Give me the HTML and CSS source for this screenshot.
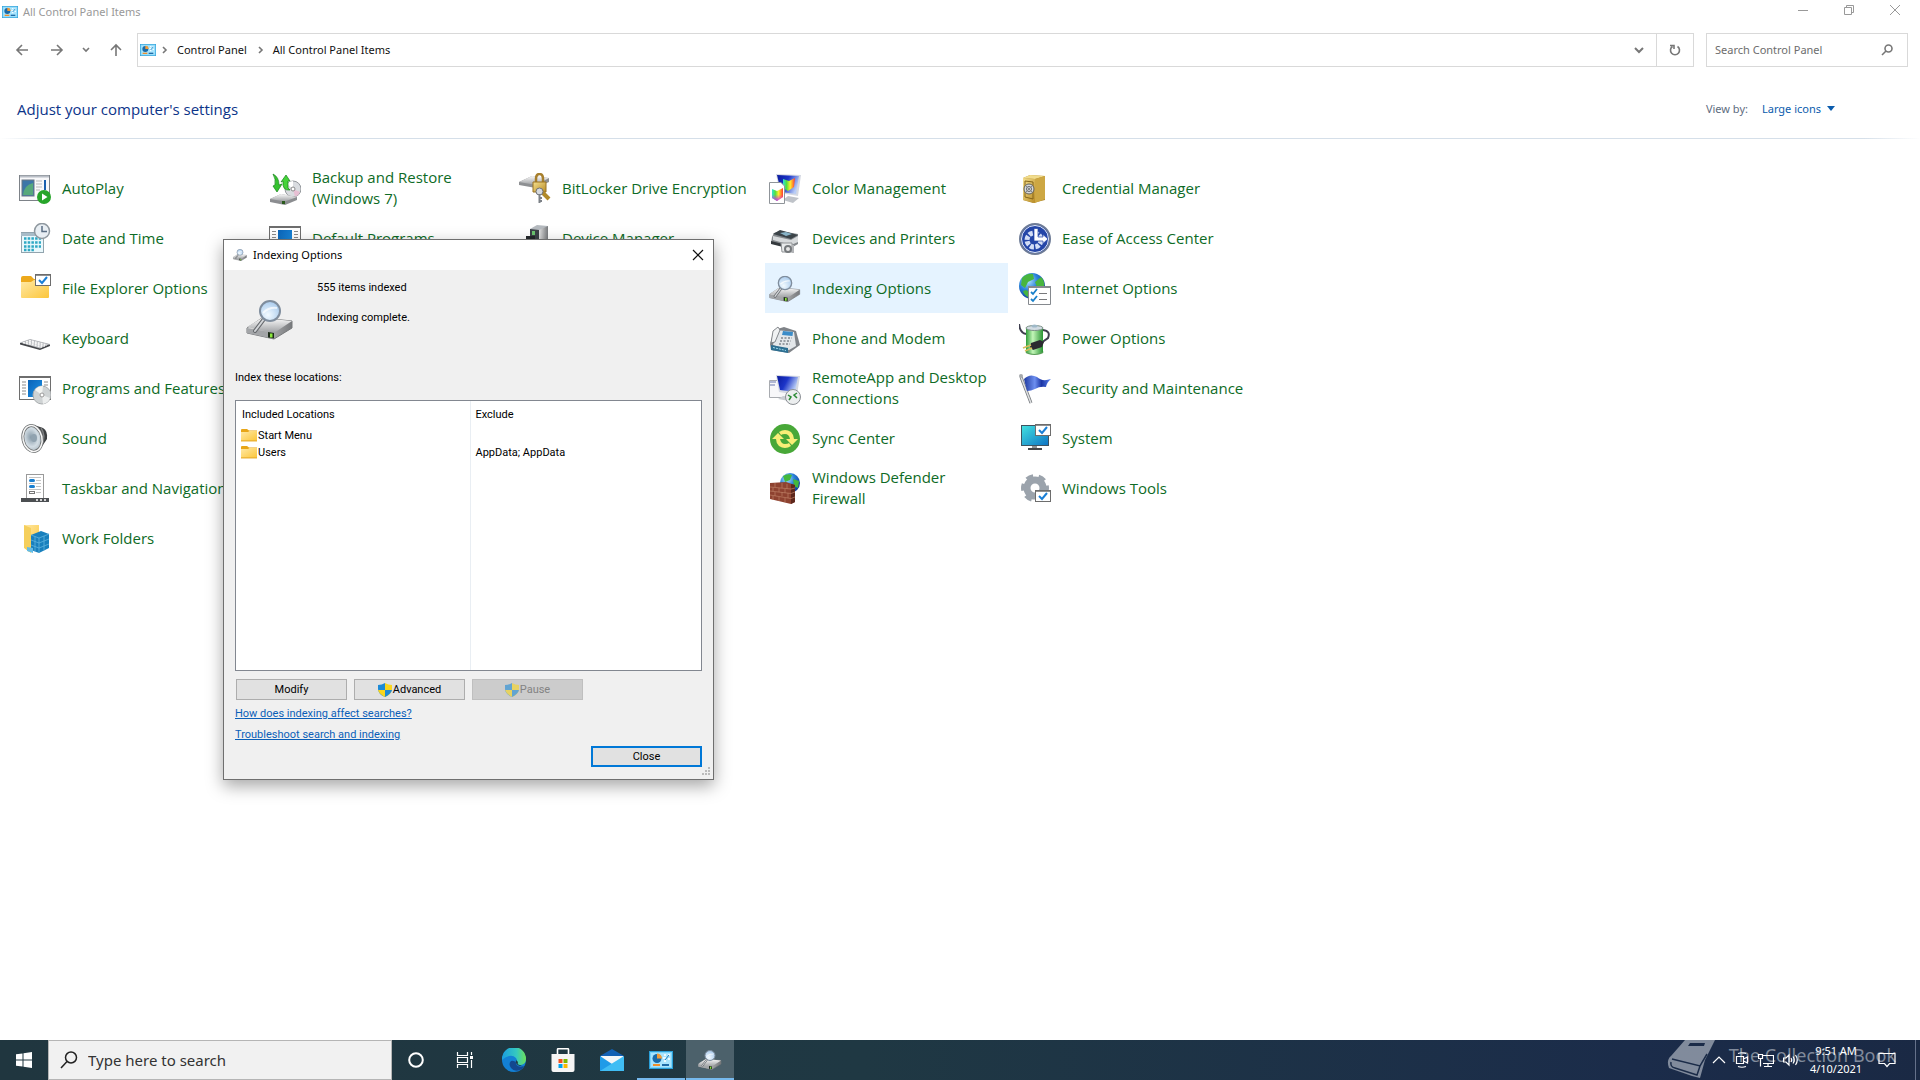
FILE: index.html
```html
<!DOCTYPE html>
<html lang="en">
<head>
<meta charset="utf-8">
<meta name="viewport" content="width=device-width, initial-scale=1">
<title>All Control Panel Items</title>
<link rel="stylesheet" href="styles.css">
</head>
<body>
<svg class="sprite" width="0" height="0" aria-hidden="true">
  <defs>
    <linearGradient id="steel" x1="0" y1="0" x2="0" y2="1"><stop offset="0" stop-color="#fafafa"/><stop offset="1" stop-color="#9c9ea1"/></linearGradient>
    <linearGradient id="steelDark" x1="0" y1="0" x2="1" y2="0"><stop offset="0" stop-color="#e2e2e2"/><stop offset="1" stop-color="#77797c"/></linearGradient>
    <radialGradient id="lens" cx=".4" cy=".7" r=".8"><stop offset="0" stop-color="#f2faff"/><stop offset="1" stop-color="#9fc4ea"/></radialGradient>
    <linearGradient id="folder" x1="0" y1="0" x2="1" y2="1"><stop offset="0" stop-color="#ffe9a6"/><stop offset="1" stop-color="#fcc63b"/></linearGradient>
    <linearGradient id="blue" x1="0" y1="0" x2="1" y2="1"><stop offset="0" stop-color="#0a63b8"/><stop offset="1" stop-color="#1f94e6"/></linearGradient>
    <linearGradient id="screen" x1="0" y1="0" x2="1" y2=".4"><stop offset="0" stop-color="#0a1a9c"/><stop offset=".5" stop-color="#1c35c8"/><stop offset="1" stop-color="#b9cdf6"/></linearGradient>
    <linearGradient id="rainbow" x1="0" y1="0" x2="1" y2="0"><stop offset="0" stop-color="#2ee3d8"/><stop offset=".3" stop-color="#54e03c"/><stop offset=".6" stop-color="#ffee2e"/><stop offset="1" stop-color="#ff3a2e"/></linearGradient>
    <linearGradient id="rainbowLow" x1="0" y1="0" x2="0" y2="1"><stop offset=".5" stop-color="#e930d8" stop-opacity="0"/><stop offset="1" stop-color="#c22bff"/></linearGradient>
    <radialGradient id="globe" cx=".35" cy=".3" r=".8"><stop offset="0" stop-color="#b7e6ff"/><stop offset=".45" stop-color="#2a83da"/><stop offset="1" stop-color="#0b2f8c"/></radialGradient>
    <linearGradient id="gold" x1="0" y1="0" x2="1" y2="1"><stop offset="0" stop-color="#f5e08e"/><stop offset="1" stop-color="#b98c26"/></linearGradient>
    <linearGradient id="green" x1="0" y1="0" x2="1" y2="0"><stop offset="0" stop-color="#2f9e3a"/><stop offset=".4" stop-color="#c3f6b8"/><stop offset="1" stop-color="#2a9434"/></linearGradient>
    <linearGradient id="monitor" x1="0" y1="0" x2="1" y2="1"><stop offset="0" stop-color="#43e2e0"/><stop offset="1" stop-color="#0d72c4"/></linearGradient>
    <radialGradient id="cone" cx=".45" cy=".45" r=".6"><stop offset="0" stop-color="#8397a5"/><stop offset=".6" stop-color="#d3dde4"/><stop offset="1" stop-color="#a7b4bd"/></radialGradient>
    <linearGradient id="flag" x1="0" y1="0" x2="1" y2="0"><stop offset="0" stop-color="#1f3aa0"/><stop offset=".4" stop-color="#6d8ff0"/><stop offset=".65" stop-color="#1b35a6"/><stop offset="1" stop-color="#5a82ee"/></linearGradient>
    <linearGradient id="edgeGreen" x1="0" y1="0" x2="1" y2="0"><stop offset="0" stop-color="#1a9de0"/><stop offset=".6" stop-color="#35c8c0"/><stop offset="1" stop-color="#6ee05a"/></linearGradient>

    <symbol id="i-index" viewBox="0 0 48 40">
      <path d="M1 28 16 18 46 21V28L28 39 1 33z" fill="url(#steelDark)" stroke="#77797b" stroke-width="1"/>
      <path d="M1 27 16 18 46 21 28 33z" fill="url(#steel)"/>
      <path d="M1 28 28 33V39L1 33z" fill="#a3a5a8"/>
      <path d="M22 32 28 33V38.500L22 37.500z" fill="#1c2c18"/><path d="M24 33.500h2.500v4H24z" fill="#8be83c"/>
      <path d="M18 19 9 31" stroke="#66696d" stroke-width="4" stroke-linecap="round"/>
      <path d="M18 19 9 31" stroke="#d2d5d8" stroke-width="2" stroke-linecap="round"/>
      <circle cx="24" cy="11" r="10" fill="url(#lens)" stroke="#7f8d9d" stroke-width="2"/>
      <path d="M17 13Q23 7 31 8" fill="none" stroke="#fff" stroke-width="2" opacity=".7"/>
    </symbol>
    <symbol id="i-cpl" viewBox="0 0 24 18">
      <rect x=".5" y=".5" width="23" height="17" fill="#7bd3fa" stroke="#2a9fd8"/>
      <rect x="2" y="2" width="20" height="14" fill="#a8e4fd"/>
      <circle cx="8" cy="7.500" r="4.500" fill="#1a6aa8"/><path d="M8 7.500V2.500A5 5 0 0 1 13 7.500z" fill="#f19b38"/>
      <path d="M15 4h2M19 4h2M14 7h3M19 8h2M15 10h2" stroke="#fff" stroke-width="1.500"/><path d="M16 9 20 4" stroke="#1e78b8" stroke-width="1"/>
      <path d="M4 14h7" stroke="#ef8f2c" stroke-width="2"/><path d="M13 14h7" stroke="#1e6ca8" stroke-width="2"/>
    </symbol>
    <symbol id="i-folder" viewBox="0 0 16 14">
      <path d="M0 2Q0 1 1 1H6L8 2.500H16V13H0z" fill="#e8a618"/><path d="M0 4H7L8.500 3H16V12.500H0z" fill="url(#folder)"/><path d="M0 13h16" stroke="#eab23a"/>
    </symbol>
    <symbol id="i-shield" viewBox="0 0 14 14">
      <path d="M7 0Q4 2 0 2V6Q0 11 7 14z" fill="#1c8ad6"/><path d="M7 0Q10 2 14 2V6Q14 11 7 14z" fill="#f9d61c"/>
      <path d="M7 7H14Q13 11 7 14z" fill="#1c8ad6"/><path d="M7 7H0Q1 11 7 14z" fill="#f9d61c"/>
    </symbol>
    <symbol id="i-check" viewBox="0 0 16 12">
      <rect x=".5" y=".5" width="15" height="11" fill="#fff" stroke="#6d6d6d"/><path d="M0 1h16" stroke="#6d6d6d" stroke-width="1.500"/>
      <path d="M4 6 7 9 12 3" fill="none" stroke="#1a7fd6" stroke-width="2"/>
    </symbol>
  </defs>
</svg>

<main class="window">
  <header class="titlebar">
    <svg class="icon-16" viewBox="0 0 24 18"><use href="#i-cpl"/></svg>
    <h1 class="title">All Control Panel Items</h1>
    <div class="caption">
      <button class="plain" aria-label="Minimize"><svg width="12" height="12" viewBox="0 0 12 12"><path d="M1 6.500h10" stroke="#999"/></svg></button>
      <button class="plain" aria-label="Restore"><svg width="12" height="12" viewBox="0 0 12 12" fill="none" stroke="#999"><path d="M1.500 3.500h7v7h-7zM3.500 3V1.500h7v7H9"/></svg></button>
      <button class="plain" aria-label="Close window"><svg width="12" height="12" viewBox="0 0 12 12"><path d="M1 1 11 11M11 1 1 11" stroke="#999"/></svg></button>
    </div>
  </header>

  <nav class="toolbar">
    <div class="history">
      <button class="plain" aria-label="Back"><svg width="14" height="14" viewBox="0 0 14 14"><path d="M13 7H2M7 2 2 7 7 12" class="nav-line"/></svg></button>
      <button class="plain" aria-label="Forward"><svg width="14" height="14" viewBox="0 0 14 14"><path d="M1 7H12M7 2 12 7 7 12" class="nav-line"/></svg></button>
      <button class="plain narrow" aria-label="Recent locations"><svg width="8" height="8" viewBox="0 0 8 8"><path d="M1 2 4 5 7 2" class="nav-line"/></svg></button>
      <button class="plain" aria-label="Up"><svg width="14" height="14" viewBox="0 0 14 14"><path d="M7 13V2M2 7 7 2 12 7" class="nav-line"/></svg></button>
    </div>
    <div class="address">
      <svg class="icon-16" viewBox="0 0 24 18"><use href="#i-cpl"/></svg>
      <svg width="8" height="8" viewBox="0 0 8 8"><path d="M3 1 6 4 3 7" class="nav-line"/></svg>
      <a href="#" class="crumb">Control Panel</a>
      <svg width="8" height="8" viewBox="0 0 8 8"><path d="M3 1 6 4 3 7" class="nav-line"/></svg>
      <a href="#" class="crumb">All Control Panel Items</a>
      <button class="plain drop" aria-label="Previous locations"><svg width="10" height="8" viewBox="0 0 10 8"><path d="M1 2 5 6 9 2" class="nav-line bold"/></svg></button>
      <button class="plain refresh" aria-label="Refresh"><svg width="12" height="12" viewBox="0 0 12 12"><path d="M8.500 2.500A4.500 4.500 0 1 1 3.500 2.500M1 1.500H5V5" class="nav-line"/></svg></button>
    </div>
    <label class="find">
      <input type="search" placeholder="Search Control Panel" aria-label="Search Control Panel">
      <svg width="12" height="12" viewBox="0 0 12 12"><circle cx="7.500" cy="4.500" r="3.500" class="nav-line"/><path d="M5 7 1 11" class="nav-line"/></svg>
    </label>
  </nav>

  <section class="heading">
    <h2>Adjust your computer's settings</h2>
    <div class="viewby"><span>View by:</span><a href="#">Large icons <svg width="8" height="5" viewBox="0 0 8 5"><path d="M0 0H8L4 5z" fill="#0b5cad"/></svg></a></div>
  </section>

  <section class="items">
    <a href="#" class="item c1 r1"><svg viewBox="0 0 32 32"><rect x=".500" y="2.500" width="30" height="25" fill="#f8f8fa" stroke="#7d8288"/><path d="M1 3.500h29" stroke="#b9bec6" stroke-width="2"/><rect x="3" y="7" width="12" height="16" fill="#3c76a8" stroke="#6a7784"/><path d="M4 22Q5 12 14 10V22z" fill="#57a87c"/><path d="M17 8h6M17 11h6M17 14h6M17 17h4" stroke="#b9b9b9"/><path d="M26 7v10" stroke="#1a5fae" stroke-width="2"/><circle cx="25" cy="24" r="7" fill="#27a52a"/><path d="M23 20.500V27.500L28.500 24z" fill="#fff"/></svg><span>AutoPlay</span></a>
    <a href="#" class="item c1 r2"><svg viewBox="0 0 32 32"><rect x="2.500" y="9.500" width="22" height="20" fill="#eaf8fc" stroke="#92a4ae"/><path d="M2 10h23v3H2z" fill="#a8bcc8"/><path d="M5 15.500h17M5 19.500h17M5 23.500h17M5 27h11" stroke="#2fa8c4" stroke-width="2.500" stroke-dasharray="2.500 1.200"/><circle cx="23" cy="8" r="7.500" fill="#e8eef3" stroke="#8f989f" stroke-width="1.500"/><path d="M23 3v5.500h5" fill="none" stroke="#5a6e84" stroke-width="1.500"/></svg><span>Date and Time</span></a>
    <a href="#" class="item c1 r3"><svg viewBox="0 0 32 32"><path d="M2 5Q2 3 4 3H12L15 6H30V14H2z" fill="#eda91b"/><path d="M2 9H12L15 7H30V24Q30 25 29 25H3Q2 25 2 24z" fill="url(#folder)"/><use href="#i-check" x="16" y="1" width="16" height="12"/></svg><span>File Explorer Options</span></a>
    <a href="#" class="item c1 r4"><svg viewBox="0 0 32 32"><path d="M1 20 11 16.500 31 21.500V23L21 27 1 21.500z" fill="#44464a"/><path d="M1 19.500 11 16 31 21 21 25.500z" fill="#b9bbbf"/><path d="M4 19.500 23 24M7 18.500 26 23M10 17.500 28 22" stroke="#f7f7f7" stroke-width="1.500" stroke-dasharray="2 1"/></svg><span>Keyboard</span></a>
    <a href="#" class="item c1 r5"><svg viewBox="0 0 32 32"><rect x=".500" y="3.500" width="31" height="23" fill="#fff" stroke="#6e6e6e"/><path d="M0 4h32" stroke="#6e6e6e" stroke-width="2"/><path d="M9 7h14v17H9z" fill="url(#blue)"/><path d="M3 9h4M3 12h4M3 15h4M3 18h4M3 21h4M25 9h4M25 12h4" stroke="#8b8b8b"/><circle cx="23" cy="22" r="9" fill="#cfd3d4" stroke="#a9adaf"/><path d="M23 22 16 17A9 9 0 0 1 24 13z" fill="#f2f4f2"/><path d="M23 22 31 25A9 9 0 0 1 24 31z" fill="#eceeee"/><circle cx="23" cy="22" r="2" fill="#fff" stroke="#999"/></svg><span>Programs and Features</span></a>
    <a href="#" class="item c1 r6"><svg viewBox="0 0 32 32"><path d="M15 2 24 5Q29 8 28 16L24 22 17 29z" fill="#3c3e40"/><path d="M22 5Q27 12 23 22" stroke="#7e8082" stroke-width="1.500" fill="none"/><ellipse cx="13.500" cy="15.500" rx="9.500" ry="13" transform="rotate(-12 13.500 15.500)" fill="url(#cone)" stroke="#6d7071" stroke-width="3"/><ellipse cx="13.500" cy="15.500" rx="9.500" ry="13" transform="rotate(-12 13.500 15.500)" fill="none" stroke="#f7f7f7" stroke-width="1.500"/><ellipse cx="15" cy="15" rx="3" ry="4" fill="#90a2af"/></svg><span>Sound</span></a>
    <a href="#" class="item c1 r7"><svg viewBox="0 0 32 32"><rect x="7.500" y="1.500" width="17" height="24" fill="#fff" stroke="#9a9a9a"/><path d="M10 4.500h12M17 7.500h5M10 10.500h12M17 13.500h5M10 16.500h12M17 19.500h5" stroke="#c4c4c4"/><rect x="10" y="6" width="6" height="3" rx="1.500" fill="#1a7fd0"/><rect x="10" y="12" width="6" height="3" rx="1.500" fill="#1a7fd0"/><rect x="10.500" y="18.500" width="5" height="2" fill="#fff" stroke="#777"/><path d="M2 25h28v4H2z" fill="#4c4f52"/><path d="M17 27h2M21 27h2M25 27h2" stroke="#fff" stroke-width="1.500"/></svg><span>Taskbar and Navigation</span></a>
    <a href="#" class="item c1 r8"><svg viewBox="0 0 32 32"><path d="M5 2H20V24L10 29 5 24z" fill="url(#folder)"/><path d="M5 2 12 5V30L5 25z" fill="#f5cf5c"/><path d="M12 12 22 8 30 11V25L20 30 12 27z" fill="#1980bd"/><path d="M12 12 20 15 30 11M20 15V30M12 17 20 20 30 16M12 22 20 25 30 21M16 13.500V28.500M25 13V27.500" stroke="#5fb4de" stroke-width=".8" fill="none"/><path d="M8 24 14 25V30L8 28z" fill="#64bce6"/></svg><span>Work Folders</span></a>

    <a href="#" class="item c2 r1"><svg viewBox="0 0 32 32"><circle cx="24" cy="16" r="8" fill="#d9dce0" stroke="#94989c"/><path d="M24 16 18 11A8 8 0 0 1 24 8z" fill="#fff"/><path d="M24 16 31 19A8 8 0 0 1 26 24z" fill="#e7bfd3"/><circle cx="24" cy="16" r="2" fill="#fff" stroke="#888"/><path d="M1 26 12 21 28 24V27L16 32 1 29z" fill="#8b8d90"/><path d="M1 26 12 21 28 24 16 28.500z" fill="url(#steel)"/><path d="M13 28h3v3h-3z" fill="#2a5a1c"/><path d="M4 1Q10 4 10 12L13 11 8 19 4 13 6 12Q7 6 4 1z" fill="#35c22f" stroke="#15821a" stroke-width=".7"/><path d="M17 2 21 8 19 8V15L21 17Q13 18 14 8L12 9z" fill="#45d33a" stroke="#15821a" stroke-width=".7"/></svg><span>Backup and Restore (Windows 7)</span></a>
    <a href="#" class="item c2 r2"><svg viewBox="0 0 32 32"><rect x=".500" y="3.500" width="31" height="24" fill="#fff" stroke="#6e6e6e"/><path d="M0 4h32" stroke="#6e6e6e" stroke-width="2"/><path d="M9 7h14v17H9z" fill="url(#blue)"/><path d="M3 8.500h4M3 11.500h4M3 14.500h4M25 8.500h4M25 11.500h4M25 14.500h4" stroke="#8b8b8b"/></svg><span>Default Programs</span></a>
    <a href="#" class="item c3 r1"><svg viewBox="0 0 32 32"><path d="M0 9 13 3 30 5V9L17 15 0 12z" fill="#8e9093"/><path d="M0 9 13 3 30 5 17 12z" fill="url(#steel)"/><path d="M17 9V6Q17 1 20.500 1T24 6V9" fill="none" stroke="#a77f2d" stroke-width="2.500"/><path d="M14 9H27V19H14z" fill="url(#gold)" stroke="#9a7322"/><path d="M22 18 30 26" stroke="#b18a2a" stroke-width="4"/><circle cx="20.500" cy="18.500" r="3.500" fill="#d7dadd" stroke="#6e7278"/><path d="M20.500 21V30M21 25h2M21 28h2" stroke="#7c8187" stroke-width="2"/></svg><span class="nowrap">BitLocker Drive Encryption</span></a>
    <a href="#" class="item c3 r2"><svg viewBox="0 0 32 32"><path d="M11 6 18 2 29 3V26L20 28 11 26z" fill="#b5babf"/><path d="M11 6 20 7V28L11 26z" fill="#3b4147"/><path d="M20 7 29 3V26L20 28z" fill="url(#steelDark)"/><path d="M13 8h3v4h-3z" fill="#6ac36f"/><path d="M7 13h9v8H7z" fill="#23272b"/></svg><span>Device Manager</span></a>

    <a href="#" class="item c4 r1"><svg viewBox="0 0 32 32"><path d="M7 1 32 2 29 23 11 20z" fill="#d4d8e2"/><path d="M8 2 30 3 27 21 12 19z" fill="url(#screen)"/><path d="M19 23 30 25 24 30 14 27z" fill="#bfc3c9"/><path d="M14 6 20 8 26 5 25 14 19 18 14 15z" fill="url(#rainbow)"/><path d="M.500 9.500H12L15.500 13V30.500H.500z" fill="#fff" stroke="#8f9499"/><path d="M3 16 8 18 14 15V24L8 28 3 25z" fill="url(#rainbow)"/><path d="M3 16 8 18 14 15V24L8 28 3 25z" fill="url(#rainbowLow)"/></svg><span>Color Management</span></a>
    <a href="#" class="item c4 r2"><svg viewBox="0 0 32 32"><path d="M5 10 11 8 29 11V21L22 25 2 20 3 14z" fill="#85898d"/><path d="M4 11 11 7 29 12 22 16z" fill="#3b4348"/><path d="M11 10 17 9 23 11 17 13z" fill="#87b2c6"/><path d="M4 13 22 17 29 13V19L22 22 4 17z" fill="#d7dadc"/><path d="M2 18 14 21V24L2 21z" fill="#34393d"/><path d="M12 20H23V29L13 29z" fill="#e8eaeb" stroke="#909396"/><circle cx="19" cy="26" r="4" fill="#75797c"/><circle cx="19" cy="26" r="2" fill="#e6e6e6"/><path d="M24 22v8" stroke="#b3b5b8" stroke-width="2"/></svg><span>Devices and Printers</span></a>
    <a href="#" class="item c4 r3 hot"><svg viewBox="0 0 48 40"><use href="#i-index"/></svg><span>Indexing Options</span></a>
    <a href="#" class="item c4 r4"><svg viewBox="0 0 32 32"><path d="M1 21 5 7 15 4 27 8 31 22 20 30 2 27z" fill="#7f8388"/><path d="M8 7 25 9 27 23 20 27 4 22z" fill="#e3e7ea"/><path d="M4 8 9 4 11 7 6 19 2 20z" fill="#f0f2f3" stroke="#6b6f73" stroke-width=".8"/><path d="M14 8 24 9 23.500 13 13 12z" fill="#3b8cc8"/><path d="M12 15h11M11 18h11M10 21h11" stroke="#83888e" stroke-width="1.500" stroke-dasharray="2 1.500"/><path d="M2 22 19 25V30L2 27z" fill="#2d6f92"/><path d="M4 24.500 17 27.500" stroke="#a3dced" stroke-dasharray="2 1"/></svg><span>Phone and Modem</span></a>
    <a href="#" class="item c4 r5"><svg viewBox="0 0 32 32"><path d="M.500 7.500h20v17H.500z" fill="#f7f7f9" stroke="#a8abb0"/><path d="M1 9h6M1 12h5" stroke="#6a78b0"/><path d="M7 2 31 3 28 22 10 19z" fill="#d4d8e2"/><path d="M8 3 29 4 26 19 11 17z" fill="url(#screen)"/><path d="M14 23 24 24 20 28 9 26z" fill="#c8ccd2"/><circle cx="24" cy="24" r="7.500" fill="#eceeef" stroke="#8b8f94"/><path d="M19 22 22 24 20 27M28 20 25 22 28 25" fill="none" stroke="#2b8a35" stroke-width="1.500"/></svg><span>RemoteApp and Desktop Connections</span></a>
    <a href="#" class="item c4 r6"><svg viewBox="0 0 32 32"><circle cx="16" cy="16" r="15" fill="#48a838"/><path d="M10 9Q16 5 22 9 25 12 25 16H29L23 22 17 16H21Q20 11 16 11 13 11 12 12z" fill="#f8ee77"/><path d="M22 23Q16 27 10 23 7 20 7 16H3L9 10 15 16H11Q12 21 16 21 19 21 20 20z" fill="#f8ee77"/></svg><span>Sync Center</span></a>
    <a href="#" class="item c4 r7"><svg viewBox="0 0 32 32"><circle cx="21" cy="10" r="10" fill="url(#globe)"/><path d="M14 3Q19 0 23 2L21 7 16 9zM24 6 30 8 29 15 25 13z" fill="#43b83e"/><path d="M1 10 17 9 26 12V29L22 31 1 26z" fill="#8e4230"/><path d="M22 11 26 12V29L22 31z" fill="#5d271c"/><path d="M1 14 22 16 26 15M1 18 22 20.500 26 19M1 22 22 25.500 26 24M6 10v4M13 10v5M18 11v5M4 14.500v4M10 15v4M16 16v4M6 19v4M13 19v4M19 20v5M4 23v4M10 24v4M16 25v4" stroke="#bd7f66" stroke-width=".7" fill="none"/></svg><span>Windows Defender Firewall</span></a>

    <a href="#" class="item c5 r1"><svg viewBox="0 0 32 32"><path d="M4 5 11 2 26 3V27L14 30 4 27z" fill="#b18a2f"/><path d="M4 5 11 2 26 3 16 6z" fill="#f1dc8c"/><path d="M4 5 16 6V30L4 27z" fill="url(#gold)"/><path d="M16 6 26 3V26L16 30z" fill="#cda743"/><path d="M6 8 14 9V26L6 24z" fill="none" stroke="#856519"/><circle cx="10" cy="16" r="5" fill="#d8d9da" stroke="#62635f"/><circle cx="10" cy="16" r="2.500" fill="none" stroke="#62666a"/><path d="M7 13 13 19M13 13 7 19" stroke="#83878b"/></svg><span>Credential Manager</span></a>
    <a href="#" class="item c5 r2"><svg viewBox="0 0 32 32"><circle cx="16" cy="16" r="15" fill="#2446a8" stroke="#6d7b96" stroke-width="2"/><circle cx="16" cy="16" r="13.500" fill="none" stroke="#e6ecf8"/><circle cx="15" cy="17" r="7" fill="none" stroke="#d3def6" stroke-width="5" stroke-dasharray="4 1.500"/><path d="M15 5.500h4V14h5V11.500L29 16 24 20.500V18H15z" fill="#fff" stroke="#2446a8" stroke-width=".7"/></svg><span>Ease of Access Center</span></a>
    <a href="#" class="item c5 r3"><svg viewBox="0 0 32 32"><circle cx="13" cy="13" r="13" fill="url(#globe)"/><path d="M3 5Q8 0 14 1L15 6 9 9 6 15 2 12zM16 9 22 4Q26 8 25 13L18 14zM7 17 12 20 9 24Q5 22 4 18z" fill="#48b53f"/><path d="M9.500 13.500h22v18h-22z" fill="#fff" stroke="#85898e"/><path d="M9 14h23" stroke="#85898e" stroke-width="2"/><path d="M12 19 14 21 18 16M12 26 14 28 18 23" fill="none" stroke="#1a80ca" stroke-width="1.800"/><path d="M20 20.500h8M20 26.500h8" stroke="#78797c"/></svg><span>Internet Options</span></a>
    <a href="#" class="item c5 r4"><svg viewBox="0 0 32 32"><path d="M0 1Q1 10 7 11M24 7Q32 8 29 15L22 20" fill="none" stroke="#3e3e4e" stroke-width="2"/><ellipse cx="15.500" cy="29" rx="9" ry="3" fill="#5b9e58"/><path d="M7 5h17v24q-8 4-17 0z" fill="url(#green)"/><ellipse cx="15.500" cy="5" rx="8.500" ry="2.500" fill="#d2dce3" stroke="#7b8f86"/><ellipse cx="15.500" cy="3" rx="3" ry="1.500" fill="#9fb9c8"/><path d="M12 20 21 17 25 19 23 24 14 27 11 24z" fill="#2a2b30"/><path d="M12 22 4 25M13 25 6 28" stroke="#d9bc5c" stroke-width="1.800"/></svg><span>Power Options</span></a>
    <a href="#" class="item c5 r5"><svg viewBox="0 0 32 32"><path d="M2 4 12 30" stroke="#72767a" stroke-width="3"/><path d="M2 4 12 30" stroke="#dfe1e3" stroke-width="1.500"/><circle cx="2" cy="3" r="2" fill="#a6a9ad"/><path d="M5 6Q11 0 18 4 23 9 32 6 28 9 27 14 21 13 16 16 12 18 8 18z" fill="url(#flag)"/></svg><span class="nowrap">Security and Maintenance</span></a>
    <a href="#" class="item c5 r6"><svg viewBox="0 0 32 32"><path d="M13 22h5v5h-5z" fill="#8f9396"/><path d="M9 25h14v2H9z" fill="#44474a"/><rect x="2.500" y="2.500" width="27" height="20" fill="url(#monitor)" stroke="#3e5360"/><use href="#i-check" x="16" y="1" width="16" height="12"/></svg><span>System</span></a>
    <a href="#" class="item c5 r7"><svg viewBox="0 0 32 32"><circle cx="16" cy="15" r="8" fill="none" stroke="#9ba3ac" stroke-width="7"/><circle cx="16" cy="15" r="12" fill="none" stroke="#9ba3ac" stroke-width="4" stroke-dasharray="7 5.570" stroke-dashoffset="3"/><use href="#i-check" x="16" y="17" width="16" height="12"/></svg><span>Windows Tools</span></a>
  </section>

  <section class="dialog" role="dialog" aria-labelledby="dialog-title">
    <header class="dialog-bar">
      <svg class="icon-16" viewBox="0 0 48 40"><use href="#i-index"/></svg>
      <h2 id="dialog-title">Indexing Options</h2>
      <button class="plain" aria-label="Close dialog"><svg width="12" height="12" viewBox="0 0 12 12"><path d="M1 1 11 11M11 1 1 11" stroke="#111" stroke-width="1.200"/></svg></button>
    </header>
    <div class="dialog-body">
      <div class="status">
        <svg viewBox="0 0 48 40"><use href="#i-index"/></svg>
        <div class="status-text"><p>555 items indexed</p><p>Indexing complete.</p></div>
      </div>
      <p class="list-label">Index these locations:</p>
      <div class="list">
        <table>
          <thead><tr><th>Included Locations</th><th>Exclude</th></tr></thead>
          <tbody>
            <tr><td><svg viewBox="0 0 16 14"><use href="#i-folder"/></svg>Start Menu</td><td></td></tr>
            <tr><td><svg viewBox="0 0 16 14"><use href="#i-folder"/></svg>Users</td><td>AppData; AppData</td></tr>
            <tr class="rest"><td></td><td></td></tr>
          </tbody>
        </table>
      </div>
      <div class="actions">
        <button class="btn">Modify</button>
        <button class="btn"><svg viewBox="0 0 14 14"><use href="#i-shield"/></svg>Advanced</button>
        <button class="btn" disabled><svg viewBox="0 0 14 14"><use href="#i-shield"/></svg>Pause</button>
      </div>
      <div class="links">
        <a href="#">How does indexing affect searches?</a>
        <a href="#">Troubleshoot search and indexing</a>
      </div>
      <div class="closing"><button class="btn default">Close</button></div>
    </div>
    <svg class="grip" width="10" height="10" viewBox="0 0 10 10"><path d="M7 0h2v2H7zM4 3h2v2H4zM7 3h2v2H7zM1 6h2v2H1zM4 6h2v2H4zM7 6h2v2H7z" fill="#bbb"/></svg>
  </section>
</main>

<footer class="taskbar">
  <button class="task start" aria-label="Start"><svg width="16" height="16" viewBox="0 0 16 16"><path d="M0 2.300 6.500 1.400V7.500H0zM7.500 1.200 16 0V7.500H7.500zM0 8.500H6.500V14.600L0 13.700zM7.500 8.500H16V16L7.500 14.800z" fill="#fff"/></svg></button>
  <label class="task-search">
    <svg width="18" height="18" viewBox="0 0 18 18" fill="none" stroke="#222" stroke-width="1.500"><circle cx="11" cy="6.500" r="5.500"/><path d="M7 10.500 1 17"/></svg>
    <input type="text" placeholder="Type here to search" aria-label="Type here to search">
  </label>
  <div class="tasks">
    <button class="task" aria-label="Cortana"><svg width="18" height="18" viewBox="0 0 18 18"><circle cx="9" cy="9" r="6.800" fill="none" stroke="#fff" stroke-width="2"/></svg></button>
    <button class="task" aria-label="Task View"><svg width="18" height="18" viewBox="0 0 18 18" fill="none" stroke="#fff" stroke-width="1.200"><path d="M1.500 1v3.500h10V1M1.500 17v-3.500h10V17M1.500 6.500h10v5h-10zM15.500 1v3M15.500 9v8"/><path d="M14 5h3v3h-3z" fill="#fff" stroke="none"/></svg></button>
    <button class="task" aria-label="Edge"><svg width="24" height="24" viewBox="0 0 24 24"><circle cx="12" cy="12" r="12" fill="#1380d4"/><path d="M0 11A12 12 0 0 1 24 11Q24 16 19 17 14 17 14 15 16 13 14 10 11 7 7 8 3 9 0 12z" fill="url(#edgeGreen)"/><path d="M14.500 15Q12 12 9 13 6 16 9 20 12 24 18 22 21 21 22 18 17 20 14.500 17z" fill="#13478f"/><path d="M14 15Q13 10 16 14 14.500 17 20 17.500 16 19 14 15z" fill="#203a48"/></svg></button>
    <button class="task" aria-label="Store"><svg width="24" height="24" viewBox="0 0 24 24"><path d="M6.500 6V1.500Q6.500.700 7.500.700H16.500Q17.500.700 17.500 1.500V6" fill="none" stroke="#fff" stroke-width="1.600"/><path d="M.500 6H23.500V22Q23.500 24 21.500 24H2.500Q.500 24 .500 22z" fill="#f5f5f5"/><path d="M7.500 11H11.500V15H7.500z" fill="#f2501f"/><path d="M12.500 11H16.500V15H12.500z" fill="#7eb900"/><path d="M7.500 16H11.500V20H7.500z" fill="#00a3ee"/><path d="M12.500 16H16.500V20H12.500z" fill="#feb800"/></svg></button>
    <button class="task" aria-label="Mail"><svg width="24" height="24" viewBox="0 0 24 24"><path d="M0 8 12 1 24 8V12H0z" fill="#1260b4"/><path d="M1 8H23V14L12 19 1 12z" fill="#f4f6f8"/><path d="M0 8 12 16 24 23H0z" fill="#1f9be8"/><path d="M24 8V23H22L0 23 12 15.500z" fill="#40bdf4"/></svg></button>
    <button class="task running" aria-label="Control Panel"><svg width="24" height="18" viewBox="0 0 24 18"><use href="#i-cpl"/></svg></button>
    <button class="task running active" aria-label="Indexing Options"><svg width="24" height="20" viewBox="0 0 48 40"><use href="#i-index"/></svg></button>
  </div>
  <div class="tray">
    <svg width="14" height="14" viewBox="0 0 14 14"><path d="M1 10 7 4 13 10" class="tray-line"/></svg>
    <svg width="14" height="16" viewBox="0 0 14 16"><path d="M3 1.500Q7 0 11 1.500M3 14.500Q7 16 11 14.500M1.500 4.500h7v7h-7zM8.500 7 12.500 5v6L8.500 9" class="tray-line"/></svg>
    <svg width="16" height="14" viewBox="0 0 16 14"><path d="M5 2.500h10.500v8H5M10 10.500v3M6 13.500h8M.500 1.500h4v4h-4zM2.500 5.500v8" class="tray-line"/></svg>
    <svg width="16" height="14" viewBox="0 0 16 14"><path d="M.500 5h2.500L6 2v10L3 9H.500zM8 5Q9.500 7 8 9M10 3.500Q12.500 7 10 10.500M12.500 2Q16 7 12.500 12" class="tray-line"/></svg>
    <time class="clock">9:51 AM<br>4/10/2021</time>
    <svg class="note" width="18" height="16" viewBox="0 0 18 16"><path d="M1 1.500h16v10h-5.500L9 14.500 6.500 11.500H1z" class="tray-line"/></svg>
    <span class="peek"></span>
  </div>
  <div class="watermark">
    <svg width="52" height="38" viewBox="0 0 52 38"><path d="M18 0H48L38 20 33 38 25 36 2 28Q-1 20 4 16z" fill="#a3abb8"/><path d="M5 19 33 26 40 14M4 22Q3 27 8 28L30 35 33 26" fill="none" stroke="#1b2c48" stroke-width="1.500"/><path d="M23 3 38 3 37 6 21 6z" fill="#1b2c48"/></svg>
    <span>The Collection Book</span>
  </div>
</footer>
</body>
</html>
```
FILE: styles.css
```css
* { box-sizing: border-box; }

body {
  margin: 0;
  min-height: 100vh;
  display: flex;
  flex-direction: column;
  background: #fff;
  color: #111;
  font-family: "Noto Sans", "Open Sans", sans-serif;
  font-size: 11px;
  line-height: 16px;
}

h1, h2, p { margin: 0; font-size: inherit; font-weight: 400; }
a { text-decoration: none; color: inherit; }
svg { display: block; flex: none; }
button, input { font: inherit; color: inherit; }
.sprite { height: 0; }
.icon-16 { width: 16px; height: 12px; }

.plain {
  display: flex;
  align-items: center;
  justify-content: center;
  padding: 0;
  border: 0;
  background: none;
}
.nav-line { fill: none; stroke: #777; stroke-width: 1.6; }
.nav-line.bold { stroke-width: 2; }

/* Control Panel window */
.window { flex: 1; position: relative; }

.titlebar { display: flex; align-items: center; height: 24px; padding: 0 2px; gap: 5px; }
.title { flex: 1; color: #999; }
.caption { display: flex; height: 24px; padding-bottom: 4px; }
.caption .plain { width: 46px; }

.toolbar { display: flex; margin-top: 9px; padding-right: 12px; height: 34px; }
.history { display: flex; width: 137px; padding-left: 4px; }
.history .plain { width: 35px; }
.history .narrow { width: 24px; }

.address {
  flex: 1;
  display: flex;
  align-items: center;
  gap: 4px;
  padding-left: 2px;
  border: 1px solid #d9d9d9;
}
.crumb { margin: 0 5px; }
.drop { margin-left: auto; width: 26px; align-self: stretch; }
.refresh { width: 37px; align-self: stretch; border-left: 1px solid #d9d9d9; }

.find {
  display: flex;
  align-items: center;
  width: 202px;
  margin-left: 12px;
  padding: 0 14px 0 8px;
  border: 1px solid #d9d9d9;
}
.find input, .task-search input {
  flex: 1;
  min-width: 0;
  padding: 0;
  border: 0;
  outline: 0;
  background: none;
}
.find input::placeholder { color: #6d6d6d; opacity: 1; }

.heading {
  display: flex;
  align-items: center;
  justify-content: space-between;
  height: 72px;
  padding: 12px 85px 0 17px;
  border-bottom: 1px solid;
  border-image: linear-gradient(90deg, #fff, #d5dfe9 3%, #d5dfe9 97%, #fff) 1;
}
.heading h2 { font-family: "Open Sans", "Noto Sans", sans-serif; font-size: 15px; line-height: 20px; color: #0c3489; }
.viewby { display: flex; gap: 14px; color: #5e6b80; }
.viewby a { display: flex; align-items: center; gap: 6px; color: #0b5cad; }

.items {
  display: grid;
  grid-template-columns: repeat(5, 250px);
  grid-auto-rows: 50px;
  padding: 24px 15px;
}
.item {
  display: flex;
  align-items: center;
  gap: 11px;
  width: 243px;
  padding: 0 12px 0 4px;
  font-family: "Open Sans", "Noto Sans", sans-serif;
  font-size: 15px;
  line-height: 21px;
  color: #0e6b26;
}
.item svg { width: 32px; height: 32px; margin-top: 2px; }
.item.hot { background: #e5f3ff; }
.nowrap { white-space: nowrap; }
.c1 { grid-column: 1; white-space: nowrap; }
.c2 { grid-column: 2; }
.c3 { grid-column: 3; }
.c4 { grid-column: 4; }
.c5 { grid-column: 5; }
.r1 { grid-row: 1; }
.r2 { grid-row: 2; }
.r3 { grid-row: 3; }
.r4 { grid-row: 4; }
.r5 { grid-row: 5; }
.r6 { grid-row: 6; }
.r7 { grid-row: 7; }
.r8 { grid-row: 8; }

/* Indexing Options dialog, floating over the window */
.dialog {
  position: absolute;
  left: 223px;
  top: 239px;
  width: 491px;
  border: 1px solid #6f6f6f;
  background: #f0f0f0;
  box-shadow: 0 6px 16px rgba(0, 0, 0, .35);
  color: #000;
}
.dialog-bar {
  display: flex;
  align-items: center;
  gap: 5px;
  height: 30px;
  padding-left: 8px;
  background: #fff;
}
.dialog-bar h2 { flex: 1; }
.dialog-bar .plain { width: 30px; height: 30px; }
.dialog-body {
  padding: 10px 11px 12px;
  font-family: Roboto, "Noto Sans", sans-serif;
}

.status { display: flex; height: 90px; padding-left: 11px; }
.status svg { width: 48px; height: 40px; margin-top: 20px; }
.status-text { display: flex; flex-direction: column; gap: 14px; margin-left: 23px; }
.list-label { margin-bottom: 14px; }

.list { height: 271px; border: 1px solid #828790; background: #fff; }
table { width: 100%; height: 100%; border-collapse: collapse; table-layout: fixed; }
th, td { padding: 0 5px; height: 17px; text-align: left; font-weight: 400; line-height: 17px; }
th { height: 26px; padding-left: 6px; }
th:first-child { width: 234px; }
th + th, td + td { border-left: 1px solid #e9eef3; }
th + th { padding-left: 5px; }
td svg { display: inline-block; width: 16px; height: 14px; margin-right: 1px; vertical-align: -3px; }
.rest td { height: auto; }

.actions { display: flex; gap: 7px; padding: 8px 1px 6px; }
.btn {
  display: flex;
  align-items: center;
  justify-content: center;
  gap: 1px;
  width: 111px;
  height: 21px;
  padding: 0;
  border: 1px solid #adadad;
  background: #e1e1e1;
}
.btn svg { width: 14px; height: 14px; }
.btn:disabled { background: #ccc; border-color: #bfbfbf; color: #838383; }
.btn:disabled svg { opacity: .6; }
.btn.default { border: 2px solid #0078d7; }
.links { display: flex; flex-direction: column; align-items: flex-start; gap: 5px; }
.links a { color: #0b5fb8; text-decoration: underline; }
.closing { display: flex; justify-content: flex-end; margin-top: 3px; }
.grip { position: absolute; right: 2px; bottom: 2px; }

/* Taskbar */
.taskbar {
  position: relative;
  display: flex;
  height: 40px;
  background: linear-gradient(90deg, #20363f, #1f3843 45%, #1b2c4a 85%, #1a2944);
  color: #fff;
}
.task {
  display: flex;
  align-items: center;
  justify-content: center;
  width: 48px;
  padding: 0;
  border: 0;
  background: none;
}
.task-search {
  display: flex;
  align-items: center;
  gap: 10px;
  width: 344px;
  padding-left: 11px;
  border: 1px solid #b5b5b5;
  background: #f1f1f1;
}
.task-search input { font-size: 15px; line-height: 20px; color: #333; }
.task-search input::placeholder { color: #333; opacity: 1; }
.tasks { display: flex; gap: 1px; }
.running { box-shadow: inset 0 -2px #76b9ed; }
.active { background: #4c616b; }

.tray { position: relative; z-index: 1; display: flex; align-items: center; gap: 9px; margin-left: auto; }
.tray-line { fill: none; stroke: #fff; stroke-width: 1.2; }
.clock { width: 56px; text-align: center; line-height: 18px; white-space: nowrap; }
.note { margin-left: 5px; }
.peek { width: 5px; height: 40px; margin-left: 10px; border-left: 1px solid #65718a; }

.watermark {
  position: absolute;
  right: 24px;
  top: 0;
  display: flex;
  gap: 10px;
  font-size: 18px;
  line-height: 30px;
  color: #a3abb8;
  opacity: .75;
  pointer-events: none;
}
```
